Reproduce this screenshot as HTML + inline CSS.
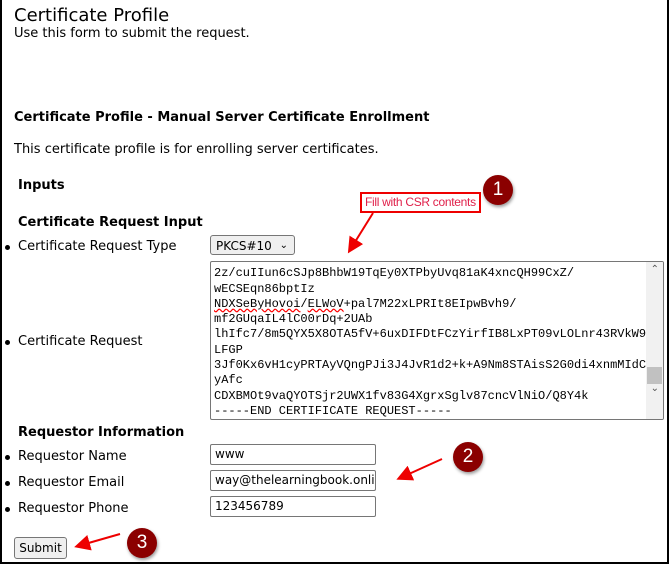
<!DOCTYPE html><html><head><style>
body{margin:0;width:669px;height:566px;background:#fff;position:relative;overflow:hidden;font-family:"DejaVu Sans",Verdana,sans-serif;font-size:13px;color:#000}
.frame{position:absolute;left:0;top:0;width:665px;height:562px;border:2px solid #000;border-top:0}
.a{position:absolute;white-space:nowrap}
.b{font-weight:bold}
.dot{position:absolute;width:5px;height:5px;border-radius:50%;background:#000}
.inp{position:absolute;left:210px;width:160px;height:19px;border:1px solid #767676;border-radius:2px;font-size:12px;line-height:19px;padding-left:4px;overflow:hidden;white-space:nowrap}
.circ{position:absolute;width:30px;height:30px;border-radius:50%;background:#8b0000;color:#fff;font-family:"Liberation Sans",sans-serif;font-size:19px;text-align:center;line-height:30px;box-shadow:1px 2px 3px rgba(0,0,0,.4)}
.ta{position:absolute;left:210px;top:261px;width:452px;height:157px;border:1px solid #767676;border-radius:2px;overflow:hidden}
.ta pre{margin:0;position:absolute;left:3px;top:-11px;font-family:"Liberation Mono",monospace;font-size:12px;line-height:15.3px}
</style></head><body>
<div class="frame"></div>
<div class="a" style="left:14px;top:5px;font-size:18px">Certificate Profile</div>
<div class="a" style="left:14px;top:26px">Use this form to submit the request.</div>
<div class="a b" style="left:14px;top:110px">Certificate Profile - Manual Server Certificate Enrollment</div>
<div class="a" style="left:14px;top:142px">This certificate profile is for enrolling server certificates.</div>
<div class="a b" style="left:18px;top:178px">Inputs</div>
<div class="a b" style="left:18px;top:215px">Certificate Request Input</div>
<div class="dot" style="left:5px;top:245px"></div><div class="a" style="left:18px;top:239px">Certificate Request Type</div>
<div class="dot" style="left:5px;top:340px"></div><div class="a" style="left:18px;top:334px">Certificate Request</div>
<div class="a b" style="left:18px;top:425px">Requestor Information</div>
<div class="dot" style="left:5px;top:455px"></div><div class="a" style="left:18px;top:449px">Requestor Name</div>
<div class="dot" style="left:5px;top:481px"></div><div class="a" style="left:18px;top:475px">Requestor Email</div>
<div class="dot" style="left:5px;top:507px"></div><div class="a" style="left:18px;top:501px">Requestor Phone</div>
<div class="a" style="left:210px;top:235px;height:20px;border:1px solid #767676;border-radius:3px;background:#efefef;font-size:12px;line-height:20px;padding-left:5px;box-sizing:border-box;width:85px">PKCS#10 <span style="position:absolute;right:6px;font-size:10px">&#8964;</span></div>
<div class="ta"><pre>  ·
2z/cuIIun6cSJp8BhbW19TqEy0XTPbyUvq81aK4xncQH99CxZ/
wECSEqn86bptIz
<span style="text-decoration:underline wavy red">NDXSeByHovoi</span>/<span style="text-decoration:underline wavy red">ELWoV</span>+pal7M22xLPRIt8EIpwBvh9/
mf2GUqaIL4lC00rDq+2UAb
lhIfc7/8m5QYX5X8OTA5fV+6uxDIFDtFCzYirfIB8LxPT09vLOLnr43RVkW9
LFGP
3Jf0Kx6vH1cyPRTAyVQngPJi3J4JvR1d2+k+A9Nm8STAisS2G0di4xnmMIdC
yAfc
CDXBMOt9vaQYOTSjr2UWX1fv83G4XgrxSglv87cncVlNiO/Q8Y4k
-----END CERTIFICATE REQUEST-----</pre>
<div style="position:absolute;right:0;top:0;width:17px;height:157px;background:#f1f1f1"></div>
<div style="position:absolute;right:1px;top:105px;width:15px;height:17px;background:#c1c1c1"></div>
<div style="position:absolute;right:4px;top:2px;font-size:10px;color:#555">&#8963;</div>
<div style="position:absolute;right:4px;top:121px;font-size:10px;color:#555">&#8964;</div>
</div>
<div class="inp" style="top:444px">www</div>
<div class="inp" style="top:470px">way@thelearningbook.online</div>
<div class="inp" style="top:496px">123456789</div>
<div class="a" style="left:14px;top:537px;width:51px;height:20px;border:1px solid #767676;border-radius:3px;background:#efefef;font-size:12px;line-height:20px;text-align:center">Submit</div>
<div class="a" style="left:360px;top:192px;border:2px solid #e00;padding:1px 3px;font-family:'Liberation Sans',sans-serif;font-size:12px;color:#e0204a;line-height:15px;letter-spacing:-0.3px">Fill with CSR contents</div>
<div class="circ" style="left:483px;top:175px">1</div>
<div class="circ" style="left:453px;top:442px">2</div>
<div class="circ" style="left:127px;top:528px">3</div>
<svg class="a" style="left:0;top:0" width="669" height="566">
<defs><marker id="m" markerWidth="8" markerHeight="8" refX="6" refY="4" orient="auto"><path d="M0,0 L8,4 L0,8 Z" fill="#e00"/></marker></defs>
<g stroke="#e00" stroke-width="2" fill="none">
<line x1="373" y1="213" x2="350" y2="250" marker-end="url(#m)"/>
<line x1="442" y1="459" x2="400" y2="478" marker-end="url(#m)"/>
<line x1="120" y1="534" x2="78" y2="546" marker-end="url(#m)"/>
</g></svg>
</body></html>
